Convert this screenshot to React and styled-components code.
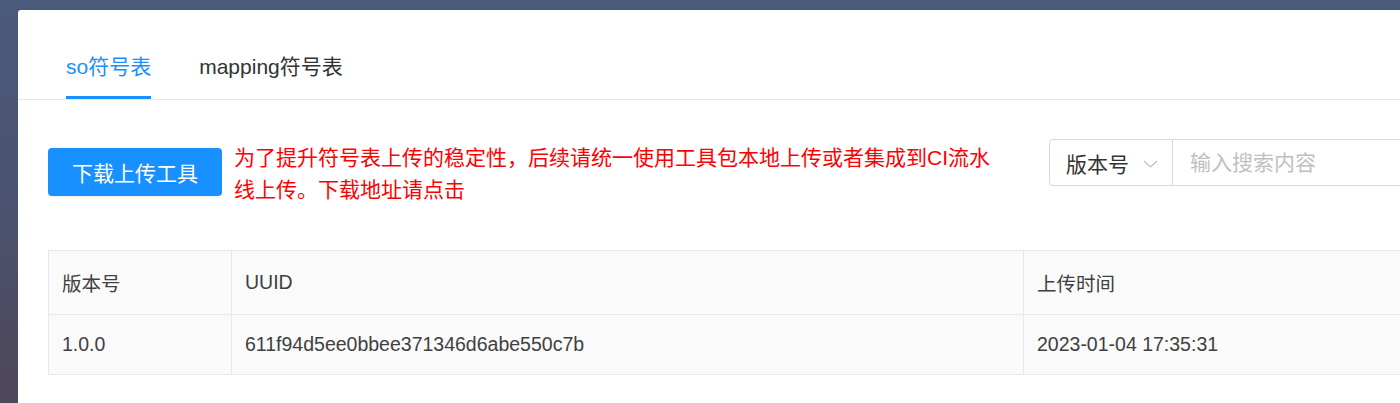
import styled, { createGlobalStyle } from 'styled-components';

const GlobalStyle = createGlobalStyle`
  html, body {
    margin: 0;
    padding: 0;
    overflow: hidden;
  }
  body {
    font-family: "Liberation Sans", "Noto Sans CJK SC", sans-serif;
  }
  * { box-sizing: border-box; }
`

const tabs = ['so符号表', 'mapping符号表'];

const rows = [
  { version: '1.0.0', uuid: '611f94d5ee0bbee371346d6abe550c7b', time: '2023-01-04 17:35:31' },
];

function App() {
  return (
    <Page>
      <GlobalStyle />
      <Card>
        <TabNav>
          {tabs.map((t, i) => (
            <Tab key={t} active={i === 0}>{t}</Tab>
          ))}
        </TabNav>
        <Body>
          <Toolbar>
            <LeftGroup>
              <PrimaryButton>下载上传工具</PrimaryButton>
              <Notice>
                为了提升符号表上传的稳定性，后续请统一使用工具包本地上传或者集成到CI流水线上传。下载地址请点击
              </Notice>
            </LeftGroup>
            <SearchGroup>
              <Select>
                <span>版本号</span>
                <svg width="15" height="8" viewBox="0 0 15 8">
                  <polyline points="1,1 7.5,7 14,1" fill="none" stroke="#bfbfbf" strokeWidth="1.2" />
                </svg>
              </Select>
              <SearchInput placeholder="输入搜索内容" />
            </SearchGroup>
          </Toolbar>
          <Table>
            <thead>
              <tr>
                <Th width="183px">版本号</Th>
                <Th width="792px">UUID</Th>
                <Th>上传时间</Th>
              </tr>
            </thead>
            <tbody>
              {rows.map((r) => (
                <tr key={r.uuid}>
                  <Td>{r.version}</Td>
                  <Td>{r.uuid}</Td>
                  <Td>{r.time}</Td>
                </tr>
              ))}
            </tbody>
          </Table>
        </Body>
      </Card>
    </Page>
  );
}

export default App;

const Page = styled.div`
  width: 1400px;
  height: 403px;
  overflow: hidden;
  padding: 10px 0 0 18px;
  background: linear-gradient(to bottom, #4a5a7a 0%, #4b5370 50%, #4e4659 100%);
`
const Card = styled.div`
  width: 1440px;
  min-height: 420px;
  background: #fff;
  border-radius: 3px 3px 0 0;
`
const TabNav = styled.div`
  display: flex;
  gap: 48px;
  padding: 41px 48px 0;
  border-bottom: 1px solid #e8e8e8;
`
const Tab = styled.div`
  font-size: 21px;
  line-height: 31px;
  padding-bottom: 14px;
  color: ${({ active }) => (active ? '#1890ff' : '#333')};
  border-bottom: 3px solid ${({ active }) => (active ? '#1890ff' : 'transparent')};
`
const Body = styled.div`
  padding: 39px 30px 0;
`
const Toolbar = styled.div`
  display: flex;
  justify-content: space-between;
  align-items: flex-start;
`
const LeftGroup = styled.div`
  display: flex;
  align-items: center;
  gap: 12px;
  margin-top: 3px;
`
const PrimaryButton = styled.button`
  width: 174px;
  height: 48px;
  border: none;
  border-radius: 4px;
  background: #1890ff;
  color: #fff;
  font-family: inherit;
  font-size: 21px;
  box-shadow: 0 2px 0 rgba(0, 0, 0, 0.045);
  padding: 0;
  margin-top: -4px;
`
const Notice = styled.div`
  width: 765px;
  color: #ff0000;
  font-size: 21px;
  line-height: 31.5px;
`
const SearchGroup = styled.div`
  display: flex;
  height: 47px;
`
const Select = styled.div`
  width: 124px;
  display: flex;
  align-items: center;
  justify-content: space-between;
  padding: 0 14px 0 16px;
  border: 1px solid #d9d9d9;
  border-radius: 4px 0 0 4px;
  font-size: 21px;
  color: #333;
  svg { margin-top: 2px; }
`
const SearchInput = styled.input`
  width: 255px;
  height: 47px;
  border: 1px solid #d9d9d9;
  border-left: none;
  border-radius: 0 4px 4px 0;
  padding: 0 17px;
  font-family: inherit;
  font-size: 21px;
  outline: none;
  &::placeholder { color: #bfbfbf; }
`
const Table = styled.table`
  width: 100%;
  margin-top: 45px;
  border-collapse: collapse;
  table-layout: fixed;
  font-size: 19.5px;
  color: #404040;
`
const Th = styled.th`
  width: ${({ width }) => width || 'auto'};
  height: 64px;
  padding: 0 13px;
  text-align: left;
  font-weight: normal;
  background: #fafafa;
  border: 1px solid #e8e8e8;
`
const Td = styled.td`
  height: 60px;
  padding: 0 13px;
  background: #fafafa;
  border: 1px solid #e8e8e8;
`
